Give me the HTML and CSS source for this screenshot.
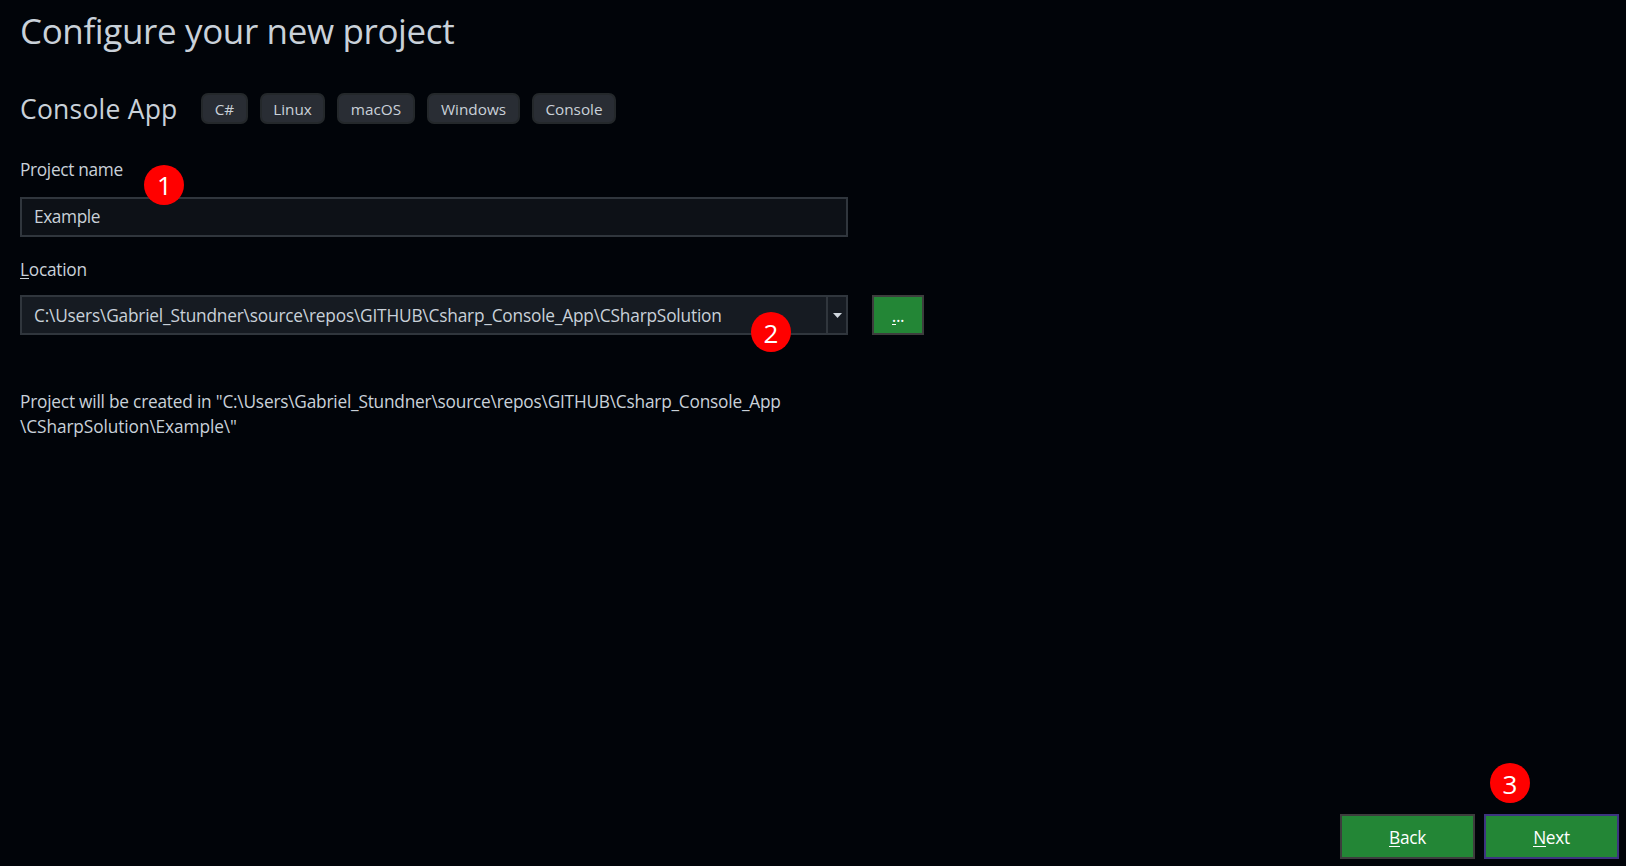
FILE: index.html
```html
<!DOCTYPE html>
<html lang="en">
<head>
<meta charset="utf-8">
<title>Configure your new project</title>
<link rel="stylesheet" href="styles.css">
</head>
<body>
<main class="dialog">
  <h1 class="title">Configure your new project</h1>
  <div class="template">
    <h2 class="template-name">Console App</h2>
    <ul class="tags">
      <li class="tag tag-cs">C#</li>
      <li class="tag tag-linux">Linux</li>
      <li class="tag tag-mac">macOS</li>
      <li class="tag tag-windows">Windows</li>
      <li class="tag tag-console">Console</li>
    </ul>
  </div>
  <div class="label label-name">Project name</div>
  <div class="field field-name"><span class="value">Example</span><span class="badge badge-1">1</span></div>
  <div class="label label-location"><span class="key">L</span>ocation</div>
  <div class="location">
    <div class="field combo">
      <span class="path">C:\Users\Gabriel_Stundner\source\repos\GITHUB\Csharp_Console_App\CSharpSolution</span>
      <span class="drop"><svg width="9" height="5" viewBox="0 0 9 5"><path d="M0 0H9L4.5 5Z" fill="#d0d7de"/></svg></span>
      <span class="badge badge-2">2</span>
    </div>
    <button class="button browse"><span class="key">.</span>..</button>
  </div>
  <p class="summary"><span class="line-1">Project will be created in "C:\Users\Gabriel_Stundner\source\repos\GITHUB\Csharp_Console_App</span><br><span class="line-2">\CSharpSolution\Example\"</span></p>
  <footer class="actions">
    <button class="button"><span class="key">B</span>ack</button>
    <button class="button next"><span class="key">N</span>ext<span class="badge badge-3">3</span></button>
  </footer>
</main>
</body>
</html>
```
FILE: styles.css
```css
* { box-sizing: border-box; }
body {
  margin: 0;
  background: #010409;
  color: #c9d1d9;
  font: 17.3px/24px "Open Sans", "Noto Sans", sans-serif;
  white-space: nowrap;
}
.dialog {
  height: 866px;
  padding: 8px 7px 7px 20px;
  display: flex;
  flex-direction: column;
  overflow: hidden;
}
.title { margin: 0; font-size: 35px; line-height: 46px; font-weight: 400; letter-spacing: -0.37px; }
.template { display: flex; align-items: center; height: 31px; margin-top: 39px; }
.template-name { margin: 0; width: 181px; font-size: 26.5px; line-height: 31px; padding-top: 1px; font-weight: 400; letter-spacing: 0.22px; }
.tags { display: flex; gap: 12px; margin: 0; padding: 0; list-style: none; }
.tag {
  height: 31px;
  border: 2px solid #24282b;
  border-radius: 7px;
  background: #292d34;
  font-size: 15.3px;
  line-height: 28px;
  text-align: center;
}
.tag-cs { width: 47px; }
.tag-linux { width: 65px; }
.tag-mac { width: 78px; }
.tag-windows { width: 93px; }
.tag-console { width: 84px; }
.label { height: 24px; }
.label-name { margin-top: 34px; letter-spacing: -0.33px; }
.label-location { margin-top: 21px; letter-spacing: -0.25px; }
.field {
  position: relative;
  width: 828px;
  height: 40px;
  border: 2px solid #30363d;
  background: #0d1117;
  padding-left: 12px;
  display: flex;
  align-items: center;
}
.field-name { margin-top: 15px; }
.value { letter-spacing: -0.4px; }
.location { display: flex; gap: 24px; margin-top: 13px; }
.combo { background: #161b22; }
.path { padding-top: 2px; letter-spacing: -0.196px; }
.drop {
  margin-left: auto;
  width: 20px;
  height: 36px;
  border-left: 2px solid #30363d;
  display: flex;
  align-items: center;
  justify-content: center;
}
.key { box-shadow: 0 1px 0 currentColor; display: inline-block; line-height: 20px; height: 18px; }
.button {
  position: relative;
  width: 135px;
  height: 45px;
  padding: 2px 0 0;
  border: 2px solid #3d3d3d;
  background: #238636;
  color: #fff;
  font: inherit;
  letter-spacing: -0.3px;
}
.browse { width: 52px; height: 40px; }
.next { border-color: #3d3580; }
.summary { margin: 54px 0 0; line-height: 25px; }
.line-1 { letter-spacing: -0.218px; }
.line-2 { letter-spacing: -0.1px; }
.actions { margin-top: auto; display: flex; justify-content: flex-end; gap: 9px; }
.badge {
  position: absolute;
  width: 40px;
  height: 40px;
  border-radius: 50%;
  background: #f00;
  color: #fff;
  font-size: 26px;
  line-height: 42px;
  letter-spacing: 0;
  text-align: center;
}
.badge-1 { left: 122px; top: -34px; line-height: 41px; padding-left: 1px; }
.badge-2 { left: 729px; top: 15px; }
.badge-3 { left: 4px; top: -53px; }
```
